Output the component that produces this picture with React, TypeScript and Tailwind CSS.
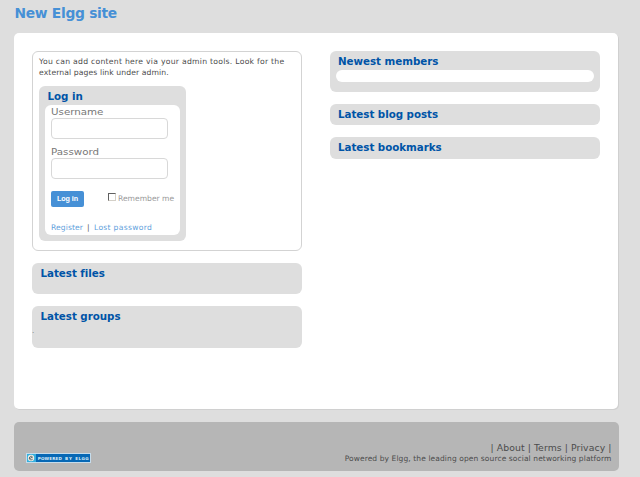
import React from "react";

const heading = "whitespace-nowrap text-[10.3px] font-bold leading-[14px] tracking-[-0.03px] text-[#0054a7]";

function Panel({ title, className }: { title: string; className: string }) {
  return (
    <section className={`rounded-[6px] bg-[#dedede] ${className}`}>
      <h2 className={heading}>{title}</h2>
    </section>
  );
}

function Field({ label, type }: { label: string; type: string }) {
  return (
    <label className="block h-[40px] text-[#777]">
      <span className="block h-[13px] w-[90px] origin-left scale-x-[1.21] whitespace-nowrap text-[8.5px] leading-[15px]">{label}</span>
      <input type={type} className="block h-[21px] w-[117px] rounded-[4px] border border-[#d8d8d8] bg-white" />
    </label>
  );
}

function LoginBox() {
  return (
    <section className="mt-[8px] h-[155px] w-[147px] rounded-[6px] bg-[#dedede] px-[6px] pt-[3px]">
      <h2 className={`${heading} h-[16px] pl-[2.5px]`}>Log in</h2>
      <form className="h-[130px] w-[135px] rounded-[6px] bg-white pl-[6px]">
        <Field label="Username" type="text" />
        <Field label="Password" type="password" />
        <div className="flex h-[36px] pt-[6px]">
          <button type="button" className="h-[16px] w-[33px] whitespace-nowrap rounded-[2px] bg-[#4690d6] font-['Liberation_Sans',Arial,sans-serif] text-[7.2px] font-bold leading-[16px] tracking-[-0.1px] text-white">
            Log in
          </button>
          <span className="ml-[24px] mt-[2px] block h-[8px] w-[8px] border border-[#d4d0c8] border-l-[#606060] border-t-[#606060] bg-white" />
          <span className="ml-[2px] mt-[2px] whitespace-nowrap text-[7.6px] leading-[12px] text-[#999]">Remember me</span>
        </div>
        <p className="flex whitespace-nowrap text-[7.6px] leading-[13px] text-[#5f9fdc]">
          <a className="w-[36px] tracking-[0.1px]">Register</a>
          <span className="w-[7px] text-[#555]">|</span>
          <a className="tracking-[0.3px]">Lost password</a>
        </p>
      </form>
    </section>
  );
}

function ElggBadge() {
  return (
    <svg width="65" height="10" viewBox="0 0 65 10" className="block">
      <rect width="65" height="10" fill="#c5dcec" />
      <rect x="1" y="1" width="63" height="8" fill="#0768b5" />
      <rect x="1" y="1" width="9" height="8" fill="#36b0dd" />
      <circle cx="5" cy="5" r="3.2" fill="#f2eee4" />
      <path d="M3.5 5.7 6.5 4.1C5.7 2.6 3.3 3.3 3.3 5.2 3.4 7 5.5 7.3 6.7 6.1" fill="none" stroke="#48575c" strokeWidth="0.9" />
      <g fill="#d9ecf8" fontSize="4.1" fontWeight="bold" fontFamily="DejaVu Sans, sans-serif">
        <text x="11.7" y="6.5" textLength="24.3" lengthAdjust="spacing">POWERED</text>
        <text x="39" y="6.5" textLength="7" lengthAdjust="spacing">BY</text>
        <text x="49.3" y="6.5" textLength="13.2" lengthAdjust="spacing">ELGG</text>
      </g>
    </svg>
  );
}

export default function App() {
  return (
    <div className="h-[477px] w-[640px] overflow-hidden bg-[#dedede] pl-[14px] font-['DejaVu_Sans',Verdana,sans-serif] text-[#4c4c4c]">
      <h1 className="h-[33px] whitespace-nowrap pl-[0.5px] pt-[4px] text-[13.8px] font-bold leading-[18px] tracking-[-0.28px] text-[#4690d6]">New Elgg site</h1>
      <main className="flex h-[376px] w-[604px] gap-[28px] rounded-[5px] bg-white pl-[18px] pt-[18px] shadow-[1px_1px_0_#d0d0d0]">
        <div className="w-[270px]">
          <section className="h-[200px] rounded-[6px] border border-[#d3d3d3] pl-[6px] pt-[4px]">
            <p className="whitespace-nowrap text-[7.7px] leading-[11px]">
              <span className="tracking-[0.26px]">You can add content here via your admin tools. Look for the</span>
              <br />
              <span className="tracking-[0.08px]">external pages link under admin.</span>
            </p>
            <LoginBox />
          </section>
          <Panel title="Latest files" className="mt-[12px] h-[31px] pl-[8.5px] pt-[3px]" />
          <section className="mt-[12px] h-[42px] rounded-[6px] bg-[#dedede] pt-[3px]">
            <h2 className={`${heading} pl-[8.5px]`}>Latest groups</h2>
            <p className="text-[7px] leading-[16px] text-[#777]">.</p>
          </section>
        </div>
        <div className="w-[270px]">
          <section className="h-[41px] rounded-[6px] bg-[#dedede] px-[6px] pt-[3px]">
            <h2 className={`${heading} h-[16px] pl-[2px]`}>Newest members</h2>
            <div className="h-[12px] rounded-[6px] bg-white" />
          </section>
          <Panel title="Latest blog posts" className="mt-[12px] h-[21px] pl-[8px] pt-[3px]" />
          <Panel title="Latest bookmarks" className="mt-[12px] h-[22px] pl-[8px] pt-[3px]" />
        </div>
      </main>
      <footer className="mt-[13px] flex h-[49px] w-[605px] items-start justify-between rounded-[5px] bg-[#b6b6b6] pl-[12px] pr-[7.5px]">
        <div className="pt-[31px]">
          <ElggBadge />
        </div>
        <div className="whitespace-nowrap pt-[19px] text-right">
          <p className="text-[9.3px] leading-[13px] tracking-[0.08px]">| <a>About</a> | <a>Terms</a> | <a>Privacy</a> |</p>
          <p className="text-[7.5px] leading-[10px] tracking-[0.1px]">Powered by Elgg, the leading open source social networking platform</p>
        </div>
      </footer>
    </div>
  );
}
